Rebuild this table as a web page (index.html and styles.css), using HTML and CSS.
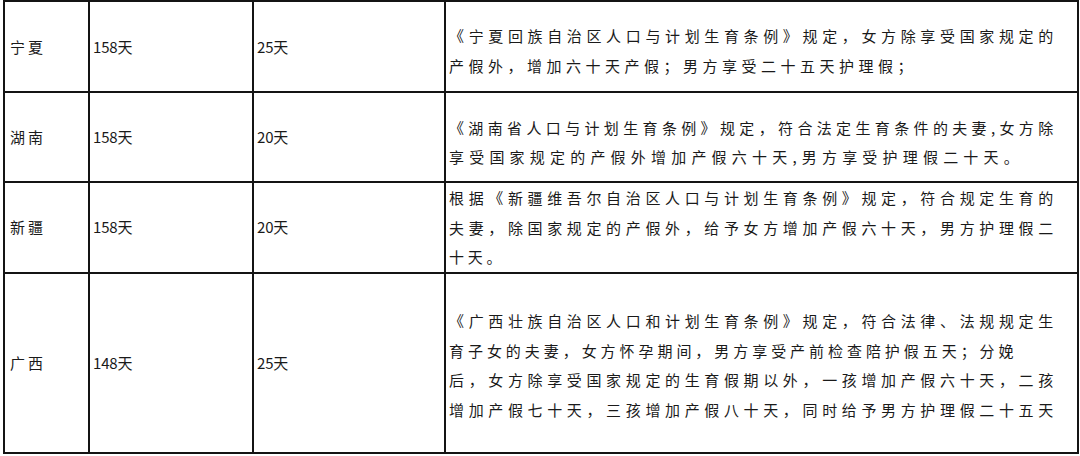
FILE: index.html
```html
<!DOCTYPE html>
<html lang="zh-CN">
<head>
<meta charset="utf-8">
<title>各地产假与护理假</title>
<link rel="stylesheet" href="styles.css">
</head>
<body>
<table class="leave">
  <colgroup>
    <col class="c-region">
    <col class="c-mat">
    <col class="c-pat">
    <col class="c-desc">
  </colgroup>
  <tbody>
    <tr class="r-1">
      <td class="region">宁夏</td>
      <td class="num">158天</td>
      <td class="num">25天</td>
      <td class="desc">
        <span class="ln j">《宁夏回族自治区人口与计划生育条例》规定，女方除享受国家规定的</span>
        <span class="ln s-r1">产假外，增加六十天产假；男方享受二十五天护理假；</span>
      </td>
    </tr>
    <tr class="r-2">
      <td class="region">湖南</td>
      <td class="num">158天</td>
      <td class="num">20天</td>
      <td class="desc p-r2">
        <span class="ln j">《湖南省人口与计划生育条例》规定，符合法定生育条件的夫妻,女方除</span>
        <span class="ln s-r2">享受国家规定的产假外增加产假六十天,男方享受护理假二十天。</span>
      </td>
    </tr>
    <tr class="r-3">
      <td class="region">新疆</td>
      <td class="num">158天</td>
      <td class="num">20天</td>
      <td class="desc tight">
        <span class="ln j">根据《新疆维吾尔自治区人口与计划生育条例》规定，符合规定生育的</span>
        <span class="ln j">夫妻，除国家规定的产假外，给予女方增加产假六十天，男方护理假二</span>
        <span class="ln">十天。</span>
      </td>
    </tr>
    <tr class="r-4">
      <td class="region">广西</td>
      <td class="num">148天</td>
      <td class="num">25天</td>
      <td class="desc p-r4">
        <span class="ln j">《广西壮族自治区人口和计划生育条例》规定，符合法律、法规规定生</span>
        <span class="ln s-r4">育子女的夫妻，女方怀孕期间，男方享受产前检查陪护假五天；分娩</span>
        <span class="ln j">后，女方除享受国家规定的生育假期以外，一孩增加产假六十天，二孩</span>
        <span class="ln j">增加产假七十天，三孩增加产假八十天，同时给予男方护理假二十五天</span>
      </td>
    </tr>
  </tbody>
</table>
</body>
</html>
```

FILE: styles.css
```css
html, body {
  margin: 0;
  padding: 0;
  background: #ffffff;
}

body {
  width: 1080px;
  height: 456px;
  overflow: hidden;
  font-family: "Noto Sans CJK SC", "Noto Sans", sans-serif;
  color: #1a1a1a;
}

.leave {
  border-collapse: collapse;
  table-layout: fixed;
  width: 1074px;
  margin-left: 3px;
  margin-top: 0;
}

.c-region { width: 85px; }
.c-mat { width: 164px; }
.c-pat { width: 192px; }
.c-desc { width: 633px; }

.leave td {
  border: 2px solid #141414;
  padding: 0;
  vertical-align: middle;
  text-align: left;
}

.r-1 { height: 91px; }
.r-2 { height: 90px; }
.r-3 { height: 90px; }
.r-4 { height: 180px; }

.region {
  font-size: 15px;
  letter-spacing: 3px;
  padding-left: 5px !important;
  line-height: 20px;
}

.num {
  font-size: 15px;
  padding-left: 3px !important;
  line-height: 20px;
  letter-spacing: -0.2px;
}

.desc {
  font-size: 15px;
  line-height: 29.5px;
  letter-spacing: 3.8px;
  padding: 8px 20px 0 3px !important;
}

.desc.p-r2 {
  padding-top: 10px !important;
}

.desc.p-r4 {
  padding-top: 5px !important;
}

.desc.tight {
  padding-top: 0 !important;
}

.ln {
  display: block;
  white-space: nowrap;
}

.ln.j {
  text-align: justify;
  text-align-last: justify;
}

.ln.s-r1 {
  letter-spacing: 4.5px;
}

.ln.s-r2 {
  letter-spacing: 5.2px;
}

.ln.s-r4 {
  letter-spacing: 3.95px;
}
```
